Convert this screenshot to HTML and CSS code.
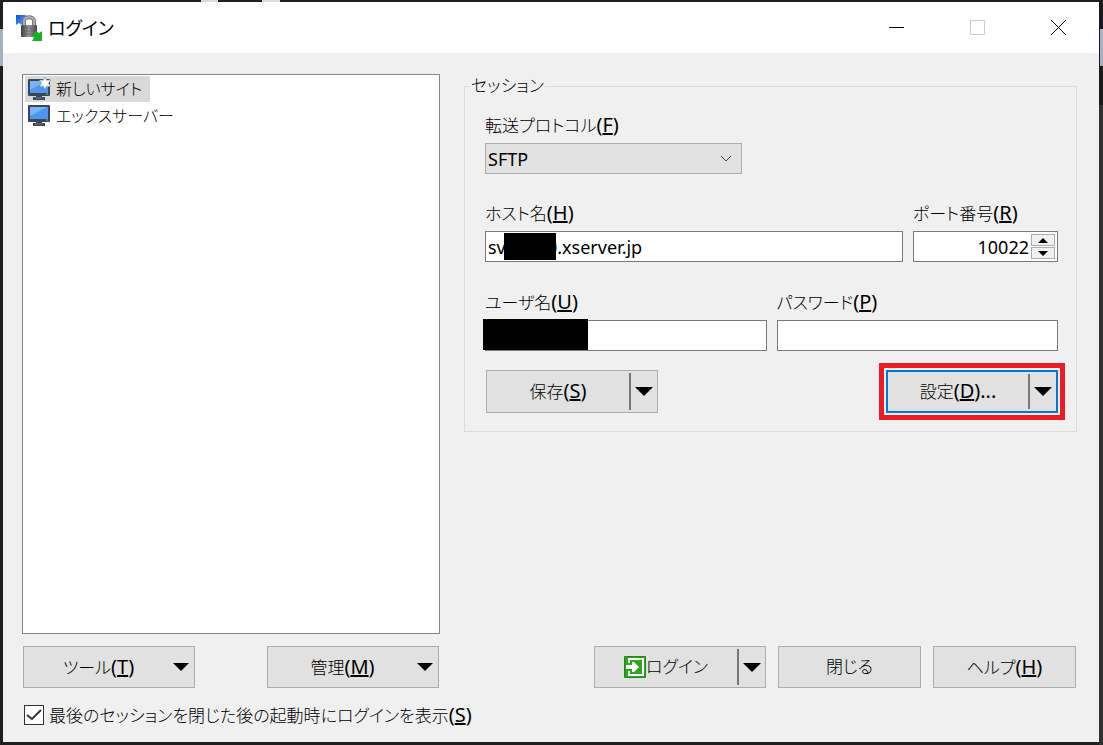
FILE: index.html
```html
<!DOCTYPE html>
<html lang="ja">
<head>
    <meta charset="UTF-8">
    <meta name="viewport" content="width=device-width, initial-scale=1.0">
    <title>ログイン</title>
    <link rel="stylesheet" href="styles.css">
</head>
<body>
    <div class="window">
        <header class="titlebar">
            <svg class="app-icon" width="28" height="28" viewBox="0 0 28 28">
                <defs>
                    <linearGradient id="lockBody" x1="0" y1="0" x2="1" y2="0">
                        <stop offset="0" stop-color="#3c3c3c"/>
                        <stop offset="0.5" stop-color="#9a9a9a"/>
                        <stop offset="1" stop-color="#444"/>
                    </linearGradient>
                    <linearGradient id="upArrow" x1="0" y1="0" x2="1" y2="1">
                        <stop offset="0" stop-color="#0d4fd0"/>
                        <stop offset="1" stop-color="#56b0ff"/>
                    </linearGradient>
                </defs>
                <path d="M1 1h10L9 4l2 2-5 5-2-2-3 2z" fill="url(#upArrow)"/>
                <path d="M9 12V7c0-5 10-5 10 0v5" fill="none" stroke="#777" stroke-width="4"/>
                <path d="M9 12V7c0-5 10-5 10 0v5" fill="none" stroke="#b0b0b0" stroke-width="2"/>
                <rect x="6" y="11" width="16" height="12" rx="1" fill="url(#lockBody)"/>
                <path d="M7 14h14M7 17h14M7 20h14" stroke="#555" stroke-opacity=".5"/>
                <path d="M27 27H17l2-3-2-2 4-5 3 2 3-2z" fill="#18b324"/>
            </svg>
            <h1>ログイン</h1>
            <div class="window-buttons">
                <button aria-label="最小化"><svg width="15" height="15"><path d="M0 7.500h15" stroke="#000"/></svg></button>
                <button aria-label="最大化" disabled><svg width="15" height="15"><path d="M.5.5h14v14H.5z" fill="none" stroke="#ccc"/></svg></button>
                <button aria-label="ウィンドウを閉じる"><svg width="15" height="15"><path d="M0 0l15 15M15 0L0 15" stroke="#000"/></svg></button>
            </div>
        </header>

        <main class="content">
            <ul class="sites">
                <li>
                    <a href="#" class="selected">
                        <svg width="24" height="24" viewBox="0 0 24 24">
                            <rect x="1" y="2" width="22" height="17" rx="1" fill="#3a4656"/>
                            <rect x="3" y="4" width="18" height="12" fill="#4f97ee"/>
                            <path d="M3 4h16L3 13z" fill="#79b4f8"/>
                            <path d="M9 19h6v1h3v3H6v-3h3z" fill="#3a4656"/>
                            <path d="M8 21h8" stroke="#6d7c8d"/>
                            <path d="M19 17h2" stroke="#7dd321"/>
                            <path d="M18 0l1.700 3.200L23.500 3l-2 3.200 2 3.300-3.800-.3L18 12.500l-1.700-3.300-3.800.3 2-3.300-2-3.200 3.800.2z" fill="#fff" stroke="#7796b5" stroke-width=".6"/>
                        </svg>
                        <span>新しいサイト</span>
                    </a>
                </li>
                <li>
                    <a href="#">
                        <svg width="24" height="24" viewBox="0 0 24 24">
                            <rect x="1" y="1" width="22" height="17" rx="1" fill="#3a4656"/>
                            <rect x="3" y="3" width="18" height="12" fill="#4f97ee"/>
                            <path d="M3 3h17L3 12z" fill="#79b4f8"/>
                            <path d="M9 18h6v1h3v3H6v-3h3z" fill="#3a4656"/>
                            <path d="M8 20h8" stroke="#6d7c8d"/>
                            <path d="M19 16h2" stroke="#7dd321"/>
                        </svg>
                        <span>エックスサーバー</span>
                    </a>
                </li>
            </ul>

            <fieldset class="session">
                <legend>セッション</legend>
                <div class="field protocol">
                    <label for="protocol">転送プロトコル<span class="key">(<u>F</u>)</span></label>
                    <select id="protocol">
                        <option>SFTP</option>
                    </select>
                </div>
                <div class="row">
                    <div class="field grow">
                        <label for="host">ホスト名<span class="key">(<u>H</u>)</span></label>
                        <div class="masked">
                            <input type="text" id="host" value="sv00000.xserver.jp">
                            <span class="mask mask-host"></span>
                        </div>
                    </div>
                    <div class="field port">
                        <label for="port">ポート番号<span class="key">(<u>R</u>)</span></label>
                        <div class="spinner">
                            <input type="text" id="port" value="10022">
                            <div class="spin-buttons">
                                <button aria-label="増やす"><svg width="10" height="5"><path d="M0 5l5-5 5 5z"/></svg></button>
                                <button aria-label="減らす"><svg width="10" height="5"><path d="M0 0l5 5 5-5z"/></svg></button>
                            </div>
                        </div>
                    </div>
                </div>
                <div class="row">
                    <div class="field grow">
                        <label for="user">ユーザ名<span class="key">(<u>U</u>)</span></label>
                        <div class="masked">
                            <input type="text" id="user">
                            <span class="mask mask-user"></span>
                        </div>
                    </div>
                    <div class="field grow">
                        <label for="password">パスワード<span class="key">(<u>P</u>)</span></label>
                        <input type="password" id="password">
                    </div>
                </div>
                <div class="actions">
                    <div class="split">
                        <button class="split-main"><span>保存<span class="key">(<u>S</u>)</span></span></button>
                        <button class="split-arrow" aria-label="保存メニュー"><svg width="18" height="9"><path d="M0 0h18L9 9z"/></svg></button>
                    </div>
                    <div class="highlight">
                        <div class="split focused">
                            <button class="split-main"><span>設定<span class="key">(<u>D</u>)...</span></span></button>
                            <button class="split-arrow" aria-label="設定メニュー"><svg width="18" height="9"><path d="M0 0h18L9 9z"/></svg></button>
                        </div>
                    </div>
                </div>
            </fieldset>
        </main>

        <footer class="footer">
            <div class="footer-left">
                <button class="btn menu"><span class="menu-text">ツール<span class="key">(<u>T</u>)</span></span><svg width="16" height="8"><path d="M0 0h16L8 8z"/></svg></button>
                <button class="btn menu"><span class="menu-text">管理<span class="key">(<u>M</u>)</span></span><svg width="16" height="8"><path d="M0 0h16L8 8z"/></svg></button>
            </div>
            <div class="footer-right">
                <div class="split">
                    <button class="split-main">
                        <svg width="22" height="22" viewBox="0 0 22 22">
                            <rect width="22" height="22" rx="1" fill="#1d8c17"/>
                            <rect x="1" y="1" width="20" height="20" fill="#2fa51f"/>
                            <path d="M5 7V3h14v16H5v-4" fill="none" stroke="#fff" stroke-width="2"/>
                            <path d="M2 9h6V6h2l5 5-5 5H8v-3H2z" fill="#fff"/>
                        </svg>
                        <span>ログイン</span>
                    </button>
                    <button class="split-arrow" aria-label="ログインメニュー"><svg width="18" height="9"><path d="M0 0h18L9 9z"/></svg></button>
                </div>
                <button class="btn">閉じる</button>
                <button class="btn">ヘルプ<span class="key">(<u>H</u>)</span></button>
            </div>
        </footer>

        <label class="startup">
            <input type="checkbox" checked>
            <span>最後のセッションを閉じた後の起動時にログインを表示<span class="key">(<u>S</u>)</span></span>
        </label>
    </div>
</body>
</html>
```
FILE: styles.css
```css
* {
    box-sizing: border-box;
}
body {
    margin: 0;
    padding: 2px 4px 3px 3px;
    min-height: 100vh;
    display: flex;
    /* desktop showing around the window */
    background:
        linear-gradient(#a3b1c2, #a3b1c2) left 29px / 3px 37px no-repeat,
        linear-gradient(#a3b1c2, #a3b1c2) right 29px / 3px 37px no-repeat,
        linear-gradient(#d5dce3, #d5dce3) 201px 0 / 17px 2px no-repeat,
        linear-gradient(#d5dce3, #d5dce3) 262px 0 / 18px 2px no-repeat,
        linear-gradient(#1a1a1c 105px, #303030 105px) right 0 / 4px 100% no-repeat,
        #1f1f21;
    color: #000;
    font-family: "Noto Sans", "Noto Sans CJK JP", sans-serif;
    font-size: 17px;
    font-weight: 300;
    line-height: 24px;
    font-feature-settings: "palt";
}
button, input, select {
    font: inherit;
    font-feature-settings: inherit;
    color: inherit;
    border-radius: 0;
    margin: 0;
    padding: 0;
}
button {
    border: none;
    background: none;
}
.key {
    font-size: 20px;
    font-weight: 400;
}
.window {
    flex: 1;
    display: flex;
    flex-direction: column;
    background-color: #f0f0f0;
}
.titlebar {
    display: flex;
    align-items: center;
    height: 51px;
    padding-left: 12px;
    background-color: #fff;
}
.titlebar h1 {
    margin: 0 0 0 5px;
    font-size: 18px;
    font-weight: 400;
}
.window-buttons {
    display: flex;
    margin-left: auto;
}
.window-buttons button {
    display: flex;
    align-items: center;
    justify-content: center;
    width: 81px;
    height: 51px;
}
.content {
    flex: 1;
    display: grid;
    grid-template-columns: 418px 1fr;
    gap: 24px;
    padding: 21px 22px 0 19px;
    align-items: start;
}
.sites {
    display: flex;
    flex-direction: column;
    gap: 1px;
    align-self: stretch;
    margin: 0;
    padding: 1px 2px;
    list-style: none;
    background-color: #fff;
    border: 1px solid #828790;
}
.sites li {
    display: flex;
}
.sites a {
    display: flex;
    align-items: center;
    gap: 5px;
    height: 26px;
    padding: 0 8px 0 2px;
    color: #000;
    font-size: 16px;
    text-decoration: none;
}
.sites a.selected {
    background-color: #d9d9d9;
}
.session {
    min-width: 0;
    margin: 0;
    padding: 15px 11px 11px 20px;
    border: 1px solid #dcdcdc;
}
.session legend {
    margin-left: -15px;
    padding: 0 1px;
}
.row {
    display: flex;
    gap: 10px;
    margin: 0 7px 28px 0;
}
.field {
    display: flex;
    flex-direction: column;
    gap: 6px;
}
.field.grow {
    flex: 1;
}
.field label {
    height: 24px;
}
.field input, .field select {
    width: 100%;
    height: 31px;
    padding: 0 2px;
    border: 1px solid #7a7a7a;
    background-color: #fff;
    font-size: 18px;
    font-weight: 400;
}
.field.protocol {
    width: 257px;
    margin-bottom: 27px;
}
.field select {
    appearance: none;
    border-color: #adadad;
    background: #e1e1e1 url("data:image/svg+xml,%3Csvg xmlns='http://www.w3.org/2000/svg' width='12' height='7'%3E%3Cpath d='M1 1l5 5 5-5' fill='none' stroke='%23444'/%3E%3C/svg%3E") no-repeat right 9px center;
}
.field.port {
    width: 145px;
}
.spinner {
    display: flex;
    padding-right: 2px;
    border: 1px solid #7a7a7a;
    background-color: #fff;
}
.spinner input {
    flex: 1;
    min-width: 0;
    height: 29px;
    border: none;
    text-align: right;
}
.spin-buttons {
    display: flex;
    flex-direction: column;
    gap: 1px;
    padding: 2px 0;
}
.spin-buttons button {
    flex: 1;
    display: flex;
    align-items: center;
    justify-content: center;
    width: 24px;
    border: 1px solid #adadad;
    background-color: #f0f0f0;
}
.masked {
    position: relative;
}
.mask {
    position: absolute;
    background-color: #000;
}
.mask-host {
    left: 19px;
    top: 2px;
    width: 52px;
    height: 27px;
}
.mask-user {
    left: -2px;
    top: -1px;
    width: 105px;
    height: 31px;
}
.actions {
    display: flex;
    justify-content: space-between;
    align-items: center;
    margin-top: -16px;
    padding-left: 1px;
}
.split {
    display: flex;
    width: 172px;
    height: 43px;
    border: 1px solid #adadad;
    background-color: #e1e1e1;
}
.split-main {
    flex: 1;
    display: flex;
    align-items: center;
    justify-content: center;
}
.split-arrow {
    width: 28px;
    margin: 2px 0;
    border-left: 2px solid #777;
    display: flex;
    align-items: center;
    justify-content: center;
}
.split.focused {
    border: 2px solid #0078d7;
}
.highlight {
    padding: 2px;
    border: 5px solid #ed1c24;
}
.footer {
    display: grid;
    grid-template-columns: 418px 1fr;
    padding: 12px 23px 0 20px;
}
.footer-left {
    display: flex;
    justify-content: space-between;
    padding-right: 2px;
}
.footer-right {
    display: flex;
    justify-content: flex-end;
    gap: 12px;
}
.btn {
    width: 143px;
    height: 42px;
    border: 1px solid #adadad;
    background-color: #e1e1e1;
}
.footer .split {
    height: 42px;
}
.btn.menu {
    display: flex;
    align-items: center;
    width: 172px;
    padding-right: 5px;
}
.menu-text {
    flex: 1;
}
.startup {
    display: flex;
    align-items: center;
    gap: 5px;
    height: 54px;
    padding-left: 21px;
}
.startup input {
    appearance: none;
    width: 20px;
    height: 20px;
    border: 1px solid #333;
    background: #fff;
}
.startup input:checked {
    background: #fff url("data:image/svg+xml,%3Csvg xmlns='http://www.w3.org/2000/svg' width='16' height='12'%3E%3Cpath d='M1 6l5 4 9-9' fill='none' stroke='%23333' stroke-width='2'/%3E%3C/svg%3E") no-repeat center;
}
```
